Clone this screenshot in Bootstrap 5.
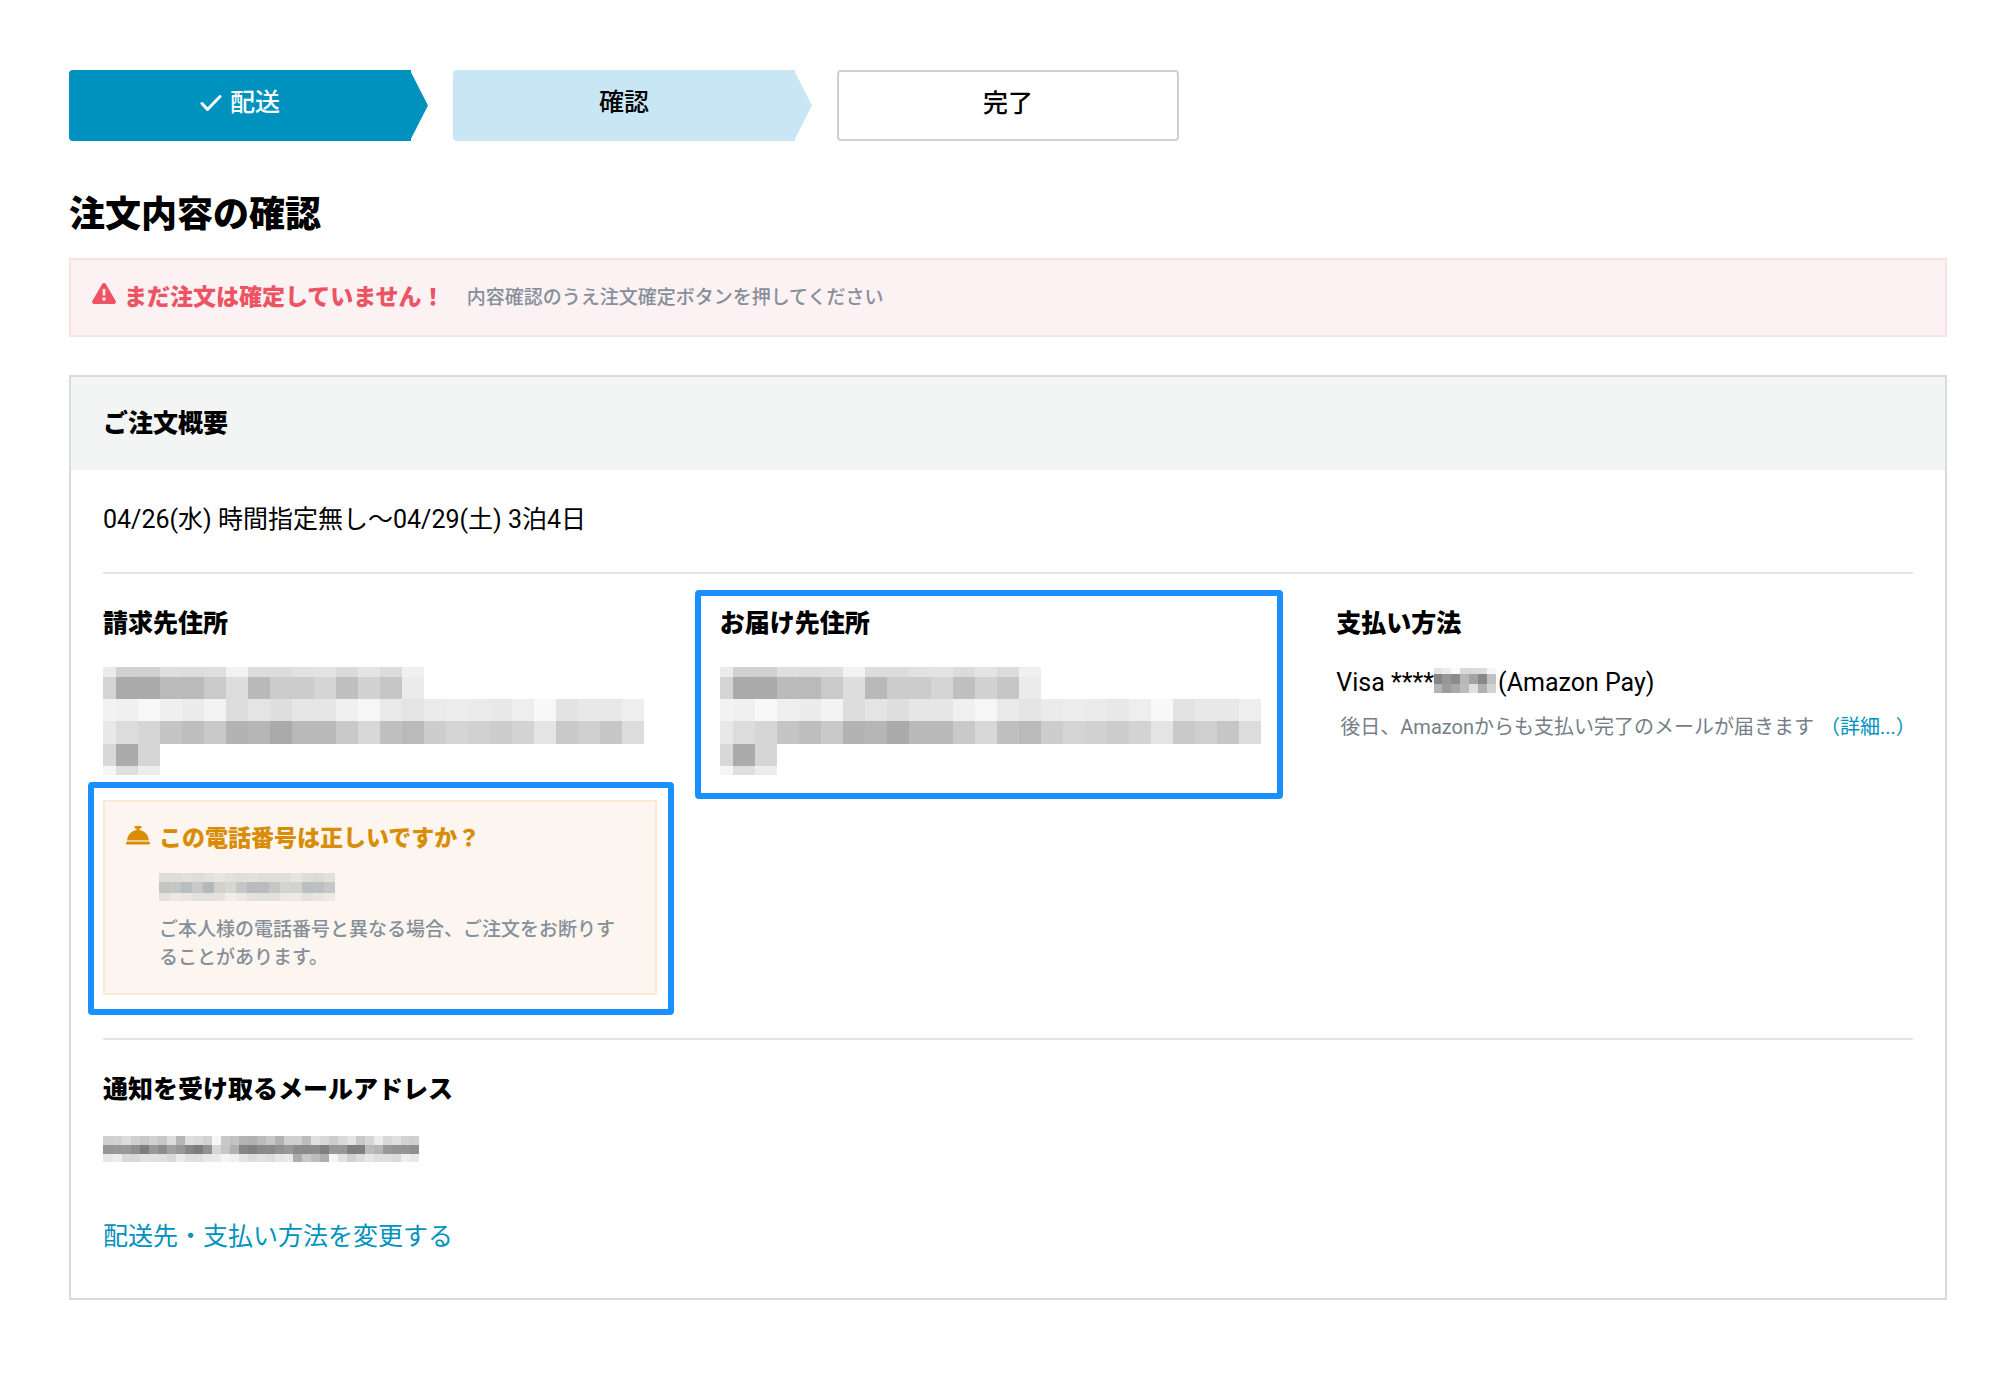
<!DOCTYPE html>
<html lang="ja">
<head>
<meta charset="utf-8">
<meta name="viewport" content="width=device-width, initial-scale=1">
<title>注文内容の確認</title>
<link href="https://cdn.jsdelivr.net/npm/bootstrap@5.3.0/dist/css/bootstrap.min.css" rel="stylesheet">
<style>
  body { font-family: Roboto, "Noto Sans CJK JP", sans-serif; font-size: 25px; line-height: 38px; color: #000; background: #fff; }
  .page { padding: 70px 69px; }
  .steps { gap: 42px; margin-bottom: 52px; }
  .step { position: relative; flex: 0 1 342px; height: 71px; padding-bottom: 6px; font-weight: 500; border-radius: 4px; }
  .step-done { background: #0092be; color: #fff; --arrow: #0092be; }
  .step-now { background: #c9e6f4; --arrow: #c9e6f4; }
  .step-next { border: 2px solid #cfcfcf; padding-bottom: 4px; }
  .step-arrow { border-top-right-radius: 0; border-bottom-right-radius: 0; }
  .step-arrow::after { content: ""; position: absolute; left: 100%; top: 0; width: 17px; height: 100%; background: var(--arrow); clip-path: polygon(0 3%, 100% 50%, 0 97%); }
  .title { font-size: 36px; line-height: 44px; font-weight: 900; margin-bottom: 21px; }
  .notice { min-height: 79px; background: #fcf1f3; border: 2px solid #fbe1e4; padding: 18px 21px 18px; margin-bottom: 38px; column-gap: 22px; }
  .notice-title { font-size: 23px; font-weight: 900; color: #ec5463; gap: 8px; }
  .hint { font-size: 19px; line-height: 28px; font-weight: 500; color: #868f98; }
  .summary { border: 2px solid #d8dbdf; }
  .summary-head { background: #f3f5f4; padding: 28px 32px 27px; }
  .summary-body { padding: 0 32px 42px; }
  .heading { font-size: 25px; line-height: 38px; font-weight: 900; margin: 0; }
  .section { padding-top: 31px; }
  .section + .section { border-top: 2px solid #e2e4e9; }
  .dates { padding-bottom: 33px; }
  .addresses { padding-bottom: 43px; --bs-gutter-x: 40px; }
  .mosaic { display: block; max-width: 100%; }
  .mosaic-address { margin-top: 24px; }
  .mosaic-mail { margin: 27px 0 56px; }
  .mosaic-card { display: inline-block; vertical-align: -2px; margin-right: 2px; }
  .phone { position: relative; background: #fdf6f0; border: 2px solid #fae9d3; margin: 25px 23px 0 0; padding: 18px 21px 21px; }
  .phone-title { font-size: 23px; font-weight: 900; color: #d98c06; gap: 9px; }
  .phone-detail { padding-left: 33px; }
  .mosaic-phone { margin: 15px 0; }
  .marked { position: relative; }
  .marker { position: absolute; border: 6px solid #1a90ff; border-radius: 4px; pointer-events: none; }
  .marker-phone { inset: -20px -19px -22px -17px; }
  .marker-address { inset: -15px 13px -24px -25px; }
  .payment { margin-top: 21px; }
  .payment-note { margin: 11px -20px 0 0; padding-left: 4px; column-gap: 6px; font-size: 20px; color: #757e88; font-weight: 400; }
  a { color: #0092be; text-decoration: none; }
  a:hover { text-decoration: underline; }
</style>
<script src="https://cdn.jsdelivr.net/npm/bootstrap@5.3.0/dist/js/bootstrap.bundle.min.js"></script>
</head>
<body>
<main class="page container-fluid">
  <ol class="steps list-unstyled d-flex">
    <li class="step step-arrow step-done d-flex align-items-center justify-content-center gap-2">
      <svg width="22" height="18" viewBox="0 0 22 18" fill="none" stroke="currentColor" stroke-width="3" stroke-linecap="round" stroke-linejoin="round" aria-hidden="true"><path d="M2 9.5 7.500 15.500 20 2.500"/></svg>
      <span>配送</span>
    </li>
    <li class="step step-arrow step-now d-flex align-items-center justify-content-center" aria-current="step">確認</li>
    <li class="step step-next d-flex align-items-center justify-content-center">完了</li>
  </ol>

  <h1 class="title">注文内容の確認</h1>

  <div class="notice d-flex flex-wrap align-items-center" role="alert">
    <div class="notice-title d-flex align-items-center">
      <svg class="mb-2" width="24" height="21" viewBox="0 0 24 21" aria-hidden="true"><path fill="currentColor" fill-rule="evenodd" d="M10.200 1.100a2.100 2.100 0 0 1 3.600 0l9.800 16.700a2.100 2.100 0 0 1-1.800 3.200H2.200a2.100 2.100 0 0 1-1.800-3.200zM10.700 6v6.500h2.600V6zM10.500 14.500v3h3v-3z"/></svg>
      <span>まだ注文は確定していません！</span>
    </div>
    <span class="hint">内容確認のうえ注文確定ボタンを押してください</span>
  </div>

  <section class="summary">
    <header class="summary-head"><h2 class="heading">ご注文概要</h2></header>
    <div class="summary-body">
      <div class="section dates">04/26(水) 時間指定無し〜04/29(土) 3泊4日</div>

      <div class="section">
        <div class="addresses row">
          <div class="col-4">
            <h3 class="heading">請求先住所</h3>
            <svg class="mosaic mosaic-address" data-mosaic="address" role="img" aria-label="非表示の住所"></svg>
            <div class="phone">
              <div class="phone-title d-flex align-items-center">
                <svg class="mb-2" width="24" height="19" viewBox="0 0 24 19" fill="currentColor" aria-hidden="true"><path d="M9.500 0h5a1 1 0 0 1 1 1v.6a1 1 0 0 1-1 1h-1V4c5.200.7 9 5 9.300 10H1.200C1.500 9 5.300 4.700 10.500 4V2.600h-1a1 1 0 0 1-1-1V1a1 1 0 0 1 1-1zM.8 16h22.400a.8.8 0 0 1 .8.800v1a.8.800 0 0 1-.8.800H.8a.8.800 0 0 1-.8-.8v-1A.8.800 0 0 1 .8 16z"/><path opacity=".4" d="M1 14h22v2H1z"/></svg>
                <span>この電話番号は正しいですか？</span>
              </div>
              <div class="phone-detail">
                <svg class="mosaic mosaic-phone" data-mosaic="phone" role="img" aria-label="非表示の電話番号"></svg>
                <p class="hint mb-0">ご本人様の電話番号と異なる場合、ご注文をお断りすることがあります。</p>
              </div>
              <div class="marker marker-phone"></div>
            </div>
          </div>
          <div class="col-4">
            <div class="marked">
              <h3 class="heading">お届け先住所</h3>
              <svg class="mosaic mosaic-address" data-mosaic="address" role="img" aria-label="非表示の住所"></svg>
              <div class="marker marker-address"></div>
            </div>
          </div>
          <div class="col-4">
            <h3 class="heading">支払い方法</h3>
            <div class="payment">Visa ****<svg class="mosaic mosaic-card" data-mosaic="card" role="img" aria-label="非表示のカード番号"></svg>(Amazon Pay)</div>
            <div class="payment-note hint d-flex flex-wrap"><span>後日、Amazonからも支払い完了のメールが届きます</span><a href="#">（詳細...）</a></div>
          </div>
        </div>
      </div>

      <div class="section">
        <h3 class="heading">通知を受け取るメールアドレス</h3>
        <svg class="mosaic mosaic-mail" data-mosaic="mail" role="img" aria-label="非表示のメールアドレス"></svg>
        <a href="#">配送先・支払い方法を変更する</a>
      </div>
    </div>
  </section>
</main>
<script>
  // Masked fields: cell sizes and one colour per cell (a grey level as a hex byte, or a full hex colour).
  const masks = {
    address: { first: 13, cell: 22, heights: [10, 22, 22, 23, 22, 9], rows: [
      "eb d1 d1 df dd df f2 dc dc e2 e3 db e4 dc f0",
      "d4 aa ab bb ba ca dd b9 cc cc d5 bf d2 c6 eb",
      "f2 f0 f8 ef eb f3 dd e4 df e6 e6 f0 f6 e9 e4 eb ed eb e8 ee f8 e3 e8 e8 ee",
      "e8 dc d6 c5 be c9 b3 b6 aa b9 b9 c9 d8 c0 ba cd d5 d1 cc d3 e4 c9 cf c6 dc",
      "d8 ab d6",
      "f5 df ed"] },
    phone: { first: 11, cell: 11, heights: [9, 11, 8], rows: [
      "dddcd8 dddcd8 e1dfd9 dddcd8 e3e1db e8e5de e3e1db e0ded8 e2e0da deddd7 e0ded8 e0ded8 e7e4dd deddd8 dcdbd7 e2e0da",
      "c4c5c3 c6c6c4 b8bdbd c8c8c6 b5b8bb d0d0cc d7d7d2 c5c6c5 b8babd b9bbbe c5c6c5 d3d4cf d2d3ce bcbfc0 bdc0c1 c6c8c7",
      "e2e1db ede9e2 e9e6df e2e1db e2e1db e6e3dc f2eee6 ebe8e0 e2e1da e1e0da e1e0da ede9e2 edeae2 e2e1dc e9e6df edeae2"] },
    card: { first: 8, cell: 9, heights: [6, 10, 9], rows: [
      "e4 ec fa d9 d9 dd f6",
      "86 97 8c b8 a2 88 c0",
      "b5 9c a8 bb e0 b0 d2"] },
    mail: { first: 10, cell: 9, heights: [9, 9, 8], rows: [
      "cf d1 dc cf c8 d1 c8 dc b5 df da d2 f7 c8 c2 b4 b0 bb c8 b2 d0 d0 bc e0 d8 cc da e4 c8 d6 eb d8 e0 d2 d0",
      "96 98 98 90 7d 98 8c a2 98 86 7d 92 d6 c6 b0 86 80 8a 8a 92 98 8c 8a 8c 80 98 98 80 80 bc b5 98 94 94 90",
      "e8 ed d8 d8 e2 e0 e0 d8 eb e0 e0 e8 ea f5 f0 e4 dc e2 dc e6 ea ac c8 bc ae f6 e2 d0 dc e6 de de da ee e8"] }
  };
  document.querySelectorAll("[data-mosaic]").forEach(svg => {
    const m = masks[svg.dataset.mosaic];
    let y = 0, width = 0, out = "";
    m.rows.forEach((row, r) => {
      let x = 0;
      row.split(" ").forEach((g, i) => {
        const w = i ? m.cell : m.first;
        const fill = g.length === 2 ? g + g + g : g;
        out += `<rect x="${x}" y="${y}" width="${w}" height="${m.heights[r]}" fill="#${fill}"/>`;
        x += w;
      });
      width = Math.max(width, x);
      y += m.heights[r];
    });
    svg.setAttribute("width", width);
    svg.setAttribute("height", y);
    svg.setAttribute("viewBox", `0 0 ${width} ${y}`);
    svg.setAttribute("shape-rendering", "crispEdges");
    svg.innerHTML = out;
  });
</script>
</body>
</html>
